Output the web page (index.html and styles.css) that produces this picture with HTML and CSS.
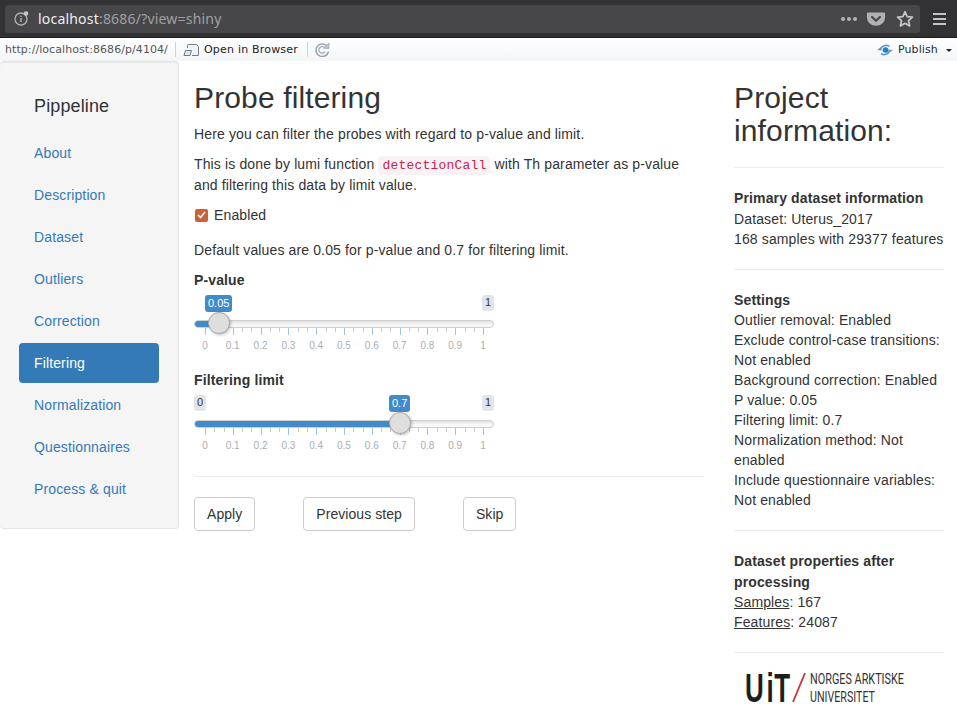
FILE: index.html
```html
<!DOCTYPE html>
<html lang="en">
<head>
    <meta charset="UTF-8">
    <title>Pippeline</title>
    <link rel="stylesheet" href="styles.css">
</head>
<body>
    <div class="browser-bar">
        <div class="address">
            <svg class="info-icon" width="18" height="18" viewBox="0 0 18 18"><circle cx="8" cy="10" r="6" fill="none" stroke="#b1b1b3" stroke-width="1.3"/><rect x="7.3" y="9" width="1.4" height="4.2" fill="#b1b1b3"/><rect x="7.3" y="6.6" width="1.4" height="1.4" fill="#b1b1b3"/><circle cx="13" cy="4.5" r="2.3" fill="#c4c4c6"/></svg>
            <span class="url"><span class="host">localhost</span>:8686/?view=shiny</span>
            <span class="dots"><i></i><i></i><i></i></span>
            <svg class="pocket" width="18" height="16" viewBox="0 0 18 16"><path d="M1 1.5h16a1 1 0 0 1 1 1V7a9 7.800 0 0 1-18 0V2.500a1 1 0 0 1 1-1z" fill="#b1b1b3"/><path d="M5 6l4 3.800L13 6" fill="none" stroke="#474749" stroke-width="2.200" stroke-linecap="round" stroke-linejoin="round"/></svg>
            <svg class="star" width="18" height="18" viewBox="0 0 18 18"><path d="M9 1.800l2.200 4.800 5.200.6-3.900 3.500 1.100 5.200L9 13.300l-4.600 2.600 1.100-5.200L1.600 7.200l5.200-.6z" fill="none" stroke="#c4c4c6" stroke-width="1.800" stroke-linejoin="round"/></svg>
        </div>
        <div class="hamburger"><i></i><i></i><i></i></div>
    </div>

    <div class="rstudio-bar">
        <span class="viewer-url">http://localhost:8686/p/4104/</span>
        <span class="tool-sep"></span>
        <svg class="open-icon" width="17" height="14" viewBox="0 0 17 14"><path d="M4.500 5V2.500a1 1 0 0 1 1-1h8l2 2V12.500H9" fill="#eef2f6" stroke="#6f7e8d"/><path d="M1 12.500l1.500-5h6l-1.500 5z" fill="#dfe6ee" stroke="#6f7e8d"/></svg>
        <span class="open-label">Open in Browser</span>
        <span class="tool-sep"></span>
        <svg class="reload-icon" width="16" height="15" viewBox="0 0 16 15"><path d="M12.500 3.500A6.300 6.300 0 1 0 14.500 9.500" fill="none" stroke="#9aa5b0" stroke-width="1.500"/><path d="M10.500 5.500A3.300 3.300 0 1 0 11 9.500" fill="none" stroke="#9aa5b0" stroke-width="1.200"/><path d="M9.500 6.300h5.500V1z" fill="#c3cbd3" stroke="#9aa5b0" stroke-width=".8"/></svg>
        <svg class="publish-icon" width="16" height="14" viewBox="0 0 16 14"><circle cx="8.500" cy="7" r="2.800" fill="#2b7bc4"/><path d="M3 6.500C5 2.500 9 1.500 12.500 3.300" fill="none" stroke="#5a9ad6" stroke-width="1.700"/><path d="M0 7l3.500-2.500L5 7.500z" fill="#5a9ad6"/><path d="M13 7.500C11 11.500 7 12.500 4 10.800" fill="none" stroke="#5a9ad6" stroke-width="1.700"/><path d="M16 7l-3.500 2.500L11 6.500z" fill="#5a9ad6"/></svg>
        <span class="publish-label">Publish</span>
        <span class="caret"></span>
    </div>

    <div class="app">
        <nav class="sidebar">
            <div class="brand">Pippeline</div>
            <a class="nav-item">About</a>
            <a class="nav-item">Description</a>
            <a class="nav-item">Dataset</a>
            <a class="nav-item">Outliers</a>
            <a class="nav-item">Correction</a>
            <a class="nav-item active">Filtering</a>
            <a class="nav-item">Normalization</a>
            <a class="nav-item">Questionnaires</a>
            <a class="nav-item">Process &amp; quit</a>
        </nav>

        <main class="content">
            <h2>Probe filtering</h2>
            <p>Here you can filter the probes with regard to p-value and limit.</p>
            <p class="with-code">This is done by lumi function <code>detectionCall</code> with Th parameter as p-value and filtering this data by limit value.</p>
            <label class="check">
                <span class="box"><svg width="9" height="8" viewBox="0 0 9 8"><path d="M1 4l2.500 2.500L8 1" fill="none" stroke="#fff" stroke-width="1.600"/></svg></span>
                Enabled
            </label>
            <p class="defaults">Default values are 0.05 for p-value and 0.7 for filtering limit.</p>

            <div class="field">
                <div class="field-label">P-value</div>
                <div class="slider">
                    <span class="bubble bubble-value b-pvalue">0.05</span>
                    <span class="bubble bubble-max">1</span>
                    <div class="track"><div class="fill fill-pvalue"></div></div>
                    <span class="handle h-pvalue"></span>
                    <div class="ticks"></div>
                    <div class="tick-labels"><span>0</span><span>0.1</span><span>0.2</span><span>0.3</span><span>0.4</span><span>0.5</span><span>0.6</span><span>0.7</span><span>0.8</span><span>0.9</span><span>1</span></div>
                </div>
            </div>

            <div class="field">
                <div class="field-label">Filtering limit</div>
                <div class="slider">
                    <span class="bubble bubble-min">0</span>
                    <span class="bubble bubble-value b-limit">0.7</span>
                    <span class="bubble bubble-max">1</span>
                    <div class="track"><div class="fill fill-limit"></div></div>
                    <span class="handle h-limit"></span>
                    <div class="ticks"></div>
                    <div class="tick-labels"><span>0</span><span>0.1</span><span>0.2</span><span>0.3</span><span>0.4</span><span>0.5</span><span>0.6</span><span>0.7</span><span>0.8</span><span>0.9</span><span>1</span></div>
                </div>
            </div>

            <hr class="content-rule">
            <div class="actions">
                <button>Apply</button>
                <button>Previous step</button>
                <button>Skip</button>
            </div>
        </main>

        <aside class="info">
            <h2>Project information:</h2>
            <hr>
            <div class="info-block">
                <b class="tall">Primary dataset information</b>
                Dataset: Uterus_2017<br>
                168 samples with 29377 features
            </div>
            <hr>
            <div class="info-block">
                <b>Settings</b>
                Outlier removal: Enabled<br>
                Exclude control-case transitions: Not enabled<br>
                Background correction: Enabled<br>
                P value: 0.05<br>
                Filtering limit: 0.7<br>
                Normalization method: Not enabled<br>
                Include questionnaire variables: Not enabled
            </div>
            <hr>
            <div class="info-block">
                <b class="wrapped">Dataset properties after processing</b>
                <u>Samples</u>: 167<br>
                <u>Features</u>: 24087
            </div>
            <hr>
            <svg class="logo" width="190" height="56" viewBox="0 0 190 56">
                <text class="logo-uit" x="0 33 45" y="44" transform="scale(.65 1)">UiT</text>
                <line x1="48" y1="44" x2="60" y2="15" stroke="#c8303a" stroke-width="1.800"/>
                <text class="logo-small" x="65" y="26" textLength="94" lengthAdjust="spacingAndGlyphs">NORGES ARKTISKE</text>
                <text class="logo-small" x="65" y="44" textLength="65" lengthAdjust="spacingAndGlyphs">UNIVERSITET</text>
            </svg>
        </aside>
    </div>
</body>
</html>
```

FILE: styles.css
```css
* { box-sizing: border-box; }
html, body { height: 100%; }
body { margin: 0; font-family: "Liberation Sans", Arial, sans-serif; font-size: 14px; line-height: 20px; letter-spacing: .13px; color: #333; background: #fff; overflow: hidden; }

/* browser chrome */
.browser-bar { height: 38px; background: #323234; display: flex; align-items: center; padding: 0 0 0 5px; border-bottom: 1px solid #1d1d1f; }
.address { width: 915px; height: 28px; background: #474749; border-radius: 3px; display: flex; align-items: center; padding-left: 8px; }
.info-icon { margin-top: -2px; }
.url { margin-left: 7px; font-family: "Noto Sans", sans-serif; font-size: 14px; letter-spacing: .2px; color: #a0a0a2; flex: 1; }
.host { color: #eeeeee; }
.dots { display: flex; gap: 2px; margin-right: 10px; }
.dots i { width: 4px; height: 4px; border-radius: 50%; background: #b1b1b3; }
.pocket { margin-right: 11px; }
.star { margin-right: 6px; }
.hamburger { margin-left: 13px; width: 13px; display: flex; flex-direction: column; gap: 3px; }
.hamburger i { height: 2px; background: #c4c4c6; }

.rstudio-bar { height: 23px; background: linear-gradient(#ffffff, #f3f5f7); display: flex; align-items: center; padding-left: 5px; font-family: "DejaVu Sans", sans-serif; font-size: 11px; letter-spacing: 0; color: #222; }
.viewer-url { color: #555; width: 170px; white-space: nowrap; letter-spacing: .07px; }
.tool-sep { width: 1px; height: 15px; background: #cfd3d7; }
.open-icon { margin-left: 7px; }
.open-label { margin-left: 4px; width: 103px; letter-spacing: .2px; }
.reload-icon { margin-left: 6px; }
.publish-icon { margin-left: 547px; }
.publish-label { margin-left: 5px; color: #1d2c3a; letter-spacing: .1px; }
.caret { margin-left: 8px; margin-top: 2px; border-left: 3px solid transparent; border-right: 3px solid transparent; border-top: 3px solid #222; }

/* page */
.app { display: flex; align-items: flex-start; }
.sidebar { width: 179px; flex: none; background: #f5f5f5; border: 1px solid #e3e3e3; border-left: 0; border-radius: 4px; padding: 19px 19px 19px; box-shadow: inset 0 1px 1px rgba(0,0,0,.05); display: flex; flex-direction: column; gap: 2px; }
.brand { height: 50px; padding: 0 15px; font-size: 18px; line-height: 50px; color: #333; }
.nav-item { height: 40px; padding: 10px 15px; color: #337ab7; border-radius: 4px; }
.nav-item.active { background: #337ab7; color: #fff; }

.content { width: 510px; margin-left: 15px; }
.content h2, .info h2 { margin: 0; font-size: 30px; line-height: 33px; font-weight: 500; }
.content h2 { padding-top: 20px; margin-bottom: 10px; }
.content p { margin: 0 0 10px; }
.content .with-code { line-height: 21px; margin-bottom: 8px; }
code { font-family: "Liberation Mono", monospace; font-size: 13px; line-height: 1; letter-spacing: .2px; color: #c7254e; background: #f9f2f4; padding: 2px 4px; border-radius: 4px; }
.check { display: flex; align-items: center; height: 20px; margin-top: 9px; }
.box { width: 13px; height: 13px; margin: 0 6px 0 1px; border-radius: 2px; background: #cc6138; display: flex; align-items: center; justify-content: center; }
.content .defaults { margin: 15px 0 0; }

.field { margin-top: 10px; width: 300px; }
.field + .field { margin-top: 14px; }
.field-label { font-weight: bold; height: 20px; }
.slider { position: relative; height: 66px; padding-top: 30px; }
.bubble { position: absolute; top: 5px; height: 16px; padding: 0 3px; font-size: 11px; letter-spacing: 0; line-height: 15px; border-radius: 3px; background: #e1e4e9; color: #333; }
.bubble-value { background: #428bca; color: #fff; height: 17px; line-height: 16px; }
.bubble-max { right: 0; }
.bubble-min { left: 0; }
.b-pvalue { left: 11px; }
.b-limit { left: 195px; }
.track { height: 8px; border: 1px solid #cfcfcf; border-radius: 4px; background: linear-gradient(#e0e0e0, #f8f8f8 60%); overflow: hidden; }
.fill { height: 8px; margin: -1px 0 0 -1px; background: #428bca; }
.fill-pvalue { width: 25px; }
.fill-limit { width: 206px; }
.handle { position: absolute; top: 22px; width: 22px; height: 22px; border-radius: 50%; background: #dedede; border: 1px solid #ababab; box-shadow: 1px 1px 3px rgba(0,0,0,.25); }
.h-pvalue { left: 14px; }
.h-limit { left: 195px; }
.ticks { height: 7px; margin-left: 11px; width: 279px;
    background:
        repeating-linear-gradient(90deg, #9fc4e3 0 1px, transparent 1px 27.8px),
        repeating-linear-gradient(90deg, #c9c9c9 0 1px, transparent 1px 9.27px);
    background-size: 100% 7px, 100% 4px;
    background-repeat: no-repeat; }
.tick-labels { display: flex; margin: 5px 0 0 -3px; width: 306px; font-size: 10px; letter-spacing: 0; line-height: 12px; color: #a9adb3; }
.tick-labels span { flex: 1; text-align: center; }

.content-rule { margin: 20px 0 20px; }
hr { border: 0; border-top: 1px solid #eee; }
.actions { display: flex; gap: 48px; }
button { height: 34px; padding: 6px 12px; font: 14px/20px "Liberation Sans", Arial, sans-serif; letter-spacing: .06px; color: #333; background: #fff; border: 1px solid #ccc; border-radius: 4px; }

.info { width: 210px; margin-left: 30px; padding-top: 20px; flex: none; }
.info hr { margin: 20px 0; }
.info-block { line-height: 20px; }
.info-block b { display: block; font-weight: bold; }
.info-block b.tall { line-height: 21px; }
.info-block b.wrapped { line-height: 20.5px; }
.logo { display: block; margin: -15px 0 0 11px; }
.logo-uit { font-family: "Liberation Sans", sans-serif; font-weight: 700; font-size: 40px; letter-spacing: 0; fill: #1d1d20; }
.logo-small { font-family: "Roboto", sans-serif; font-size: 14px; letter-spacing: 0; fill: #333; }
```
